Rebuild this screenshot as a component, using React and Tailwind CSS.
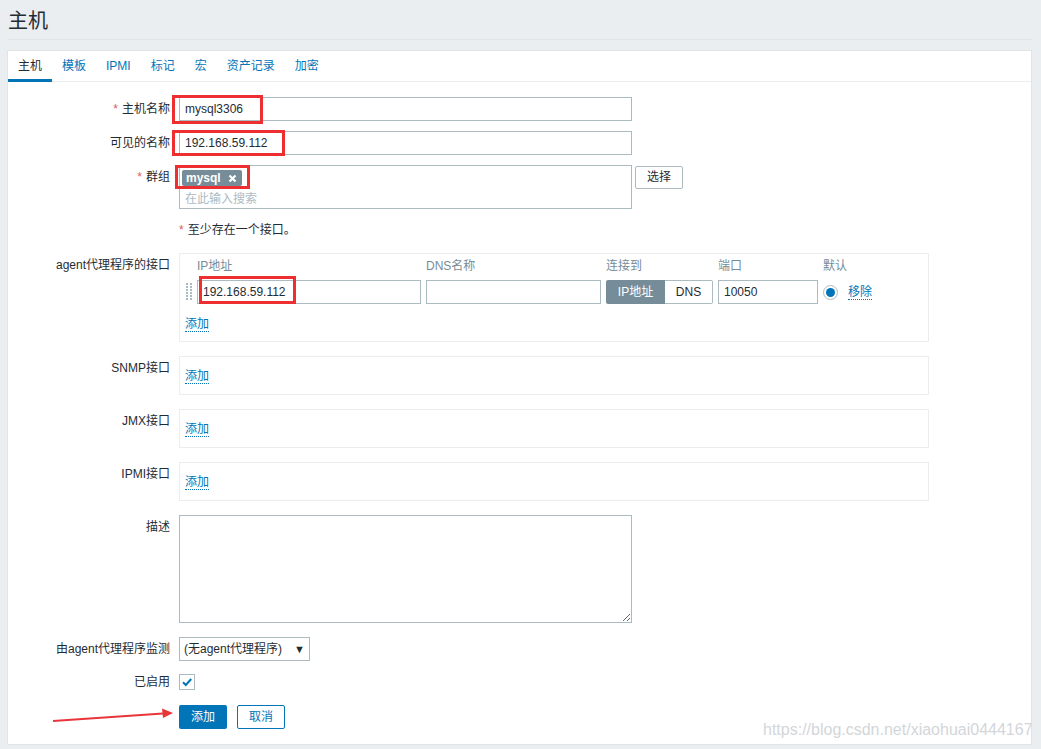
import React from "react";

const font = { fontFamily: '"Liberation Sans", Arial, "Noto Sans CJK SC", sans-serif' };

const RedBox = ({ className }) => (
  <div className={`absolute border-[3px] border-[#ee2f31] pointer-events-none ${className}`} />
);

const AddLink = () => (
  <span className="text-[#0275b8] border-b border-dotted border-[#0275b8] leading-[14px]">添加</span>
);

const Row = ({ label, required, children, className = "" }) => (
  <div className={`flex ${className}`}>
    <div className="w-[162px] text-right leading-[24px] text-[#1f2c33] shrink-0">
      {required && <span className="text-[#e45959] mr-[4px]">*</span>}
      {label}
    </div>
    <div className="ml-[9px] relative">{children}</div>
  </div>
);

const IfaceBox = () => (
  <div className="w-[750px] h-[39px] border border-[#ebeef0] flex items-center px-[5px] pt-[2px]">
    <AddLink />
  </div>
);

export default function App() {
  return (
    <div className="relative bg-[#ebeef0] h-[749px] w-[1041px] pl-[7px] pr-[9px] text-[12px] text-[#1f2c33] overflow-hidden" style={font}>
      {/* title */}
      <div className="h-[40px] border-b border-[#dfe4e7] pl-[1px] pt-[8px]">
        <h1 className="text-[20px] leading-[26px] font-normal">主机</h1>
      </div>

      <div className="mt-[10px] bg-white border border-[#dfe4e7] h-[695px]">
        {/* tabs */}
        <div className="flex h-[31px] border-b border-[#ebeef0]">
          {["主机", "模板", "IPMI", "标记", "宏", "资产记录", "加密"].map((t, i) => (
            <div
              key={t}
              className={`px-[10px] leading-[30px] ${
                i === 0 ? "text-[#1f2c33] border-b-[3px] border-[#0275b8] h-[31px]" : "text-[#0275b8]"
              }`}
            >
              {t}
            </div>
          ))}
        </div>

        <div className="pt-[15px]">
          <Row label="主机名称" required>
            <div className="w-[453px] h-[24px] border border-[#acbbc2] px-[5px] leading-[22px]">mysql3306</div>
            <RedBox className="-left-[7px] -top-[2px] w-[91px] h-[29px]" />
          </Row>

          <Row label="可见的名称" className="mt-[10px]">
            <div className="w-[453px] h-[24px] border border-[#acbbc2] px-[5px] leading-[22px]">192.168.59.112</div>
            <RedBox className="-left-[7px] -top-[1px] w-[113px] h-[26px]" />
          </Row>

          <Row label="群组" required className="mt-[10px]">
            <div className="flex items-start">
              <div className="w-[453px] h-[44px] border border-[#acbbc2] px-[2px] pt-[3px]">
                <span className="inline-flex items-center h-[16px] bg-[#768d99] text-white font-bold pl-[4px] pr-[5px] rounded-[2px]">
                  mysql
                  <svg width="9" height="9" viewBox="0 0 9 9" className="ml-[7px]">
                    <path d="M1.5 1.5 L7.5 7.5 M7.5 1.5 L1.5 7.5" stroke="white" strokeWidth="2.2" />
                  </svg>
                </span>
                <div className="text-[#acbbc2] pl-[3px] leading-[14px] mt-[5px]">在此输入搜索</div>
              </div>
              <div className="ml-[3px] mt-[1px] h-[23px] w-[48px] border border-[#acbbc2] rounded-[2px] text-center leading-[21px]">
                选择
              </div>
            </div>
            <RedBox className="-left-[4px] top-0 w-[75px] h-[24px]" />
          </Row>

          <Row label="" className="mt-[14px]">
            <div className="leading-[14px]">
              <span className="text-[#e45959] mr-[4px]">*</span>至少存在一个接口。
            </div>
          </Row>

          <Row label="agent代理程序的接口" className="mt-[16px]">
            <div className="w-[750px] h-[89px] border border-[#ebeef0] px-[5px] pt-[5px]">
              <div className="flex text-[#768d99] leading-[14px]">
                <div className="w-[12px]" />
                <div className="w-[224px]">IP地址</div>
                <div className="w-[175px] ml-[5px]">DNS名称</div>
                <div className="w-[107px] ml-[5px]">连接到</div>
                <div className="w-[100px] ml-[5px]">端口</div>
                <div className="ml-[5px]">默认</div>
              </div>
              <div className="flex items-center mt-[7px] relative">
                <svg width="12" height="24" viewBox="0 0 12 24" className="shrink-0">
                  {[3, 6, 9, 12, 15, 18].map((y) => (
                    <g key={y} fill="#acbbc2">
                      <rect x="1" y={y} width="2" height="2" />
                      <rect x="5" y={y} width="2" height="2" />
                    </g>
                  ))}
                </svg>
                <div className="w-[224px] h-[24px] border border-[#acbbc2] px-[5px] leading-[22px]">192.168.59.112</div>
                <div className="w-[175px] h-[24px] border border-[#acbbc2] ml-[5px]" />
                <div className="flex ml-[5px] h-[24px] w-[107px]">
                  <div className="w-[59px] bg-[#768d99] text-white text-center leading-[24px] rounded-l-[2px]">IP地址</div>
                  <div className="flex-1 border border-[#acbbc2] border-l-0 text-center leading-[22px] rounded-r-[2px]">DNS</div>
                </div>
                <div className="w-[100px] h-[24px] border border-[#acbbc2] ml-[5px] px-[5px] leading-[22px]">10050</div>
                <div className="ml-[5px] w-[15px] h-[15px] rounded-full border border-[#acbbc2] flex items-center justify-center">
                  <div className="w-[9px] h-[9px] rounded-full bg-[#0275b8]" />
                </div>
                <span className="ml-[10px] text-[#0275b8] border-b border-dotted border-[#0275b8] leading-[14px]">移除</span>
                <RedBox className="left-[14px] -top-[4px] w-[97px] h-[28px]" />
              </div>
              <div className="mt-[11px]">
                <AddLink />
              </div>
            </div>
          </Row>

          <Row label="SNMP接口" className="mt-[14px]">
            <IfaceBox />
          </Row>
          <Row label="JMX接口" className="mt-[14px]">
            <IfaceBox />
          </Row>
          <Row label="IPMI接口" className="mt-[14px]">
            <IfaceBox />
          </Row>

          <Row label="描述" className="mt-[14px]">
            <textarea className="block w-[453px] h-[108px] border border-[#acbbc2] outline-none" />
          </Row>

          <Row label="由agent代理程序监测" className="mt-[14px]">
            <div className="w-[131px] h-[24px] border border-[#acbbc2] flex items-center px-[4px]">
              <span>(无agent代理程序)</span>
              <span className="ml-auto text-[11px] text-[#1f2c33]">▼</span>
            </div>
          </Row>

          <Row label="已启用" className="mt-[9px]">
            <div className="h-[24px] flex items-center">
              <div className="w-[16px] h-[16px] border border-[#acbbc2] flex items-center justify-center">
                <svg width="12" height="12" viewBox="0 0 12 12">
                  <path d="M2 6.2 L4.8 9 L10.2 3" fill="none" stroke="#0275b8" strokeWidth="2" />
                </svg>
              </div>
            </div>
          </Row>

          <Row label="" className="mt-[11px]">
            <div className="flex">
              <div className="w-[48px] h-[24px] bg-[#0275b8] text-white text-center leading-[24px] rounded-[2px]">添加</div>
              <div className="ml-[10px] w-[48px] h-[24px] border border-[#0275b8] text-[#0275b8] text-center leading-[22px] rounded-[2px]">取消</div>
            </div>
          </Row>
        </div>
      </div>

      {/* red arrow annotation */}
      <svg className="absolute left-0 top-0 pointer-events-none" width="1041" height="749">
        <line x1="53" y1="721" x2="163" y2="713.6" stroke="#e8353a" strokeWidth="2" />
        <polygon points="173,713 162,708.5 163,718" fill="#e8353a" />
      </svg>

      {/* watermark */}
      <div className="absolute left-[763px] top-[721px] text-[16px] leading-[18px] text-[#d3d6d9] pointer-events-none whitespace-nowrap">
        https://blog.csdn.net/xiaohuai0444167
      </div>
    </div>
  );
}
